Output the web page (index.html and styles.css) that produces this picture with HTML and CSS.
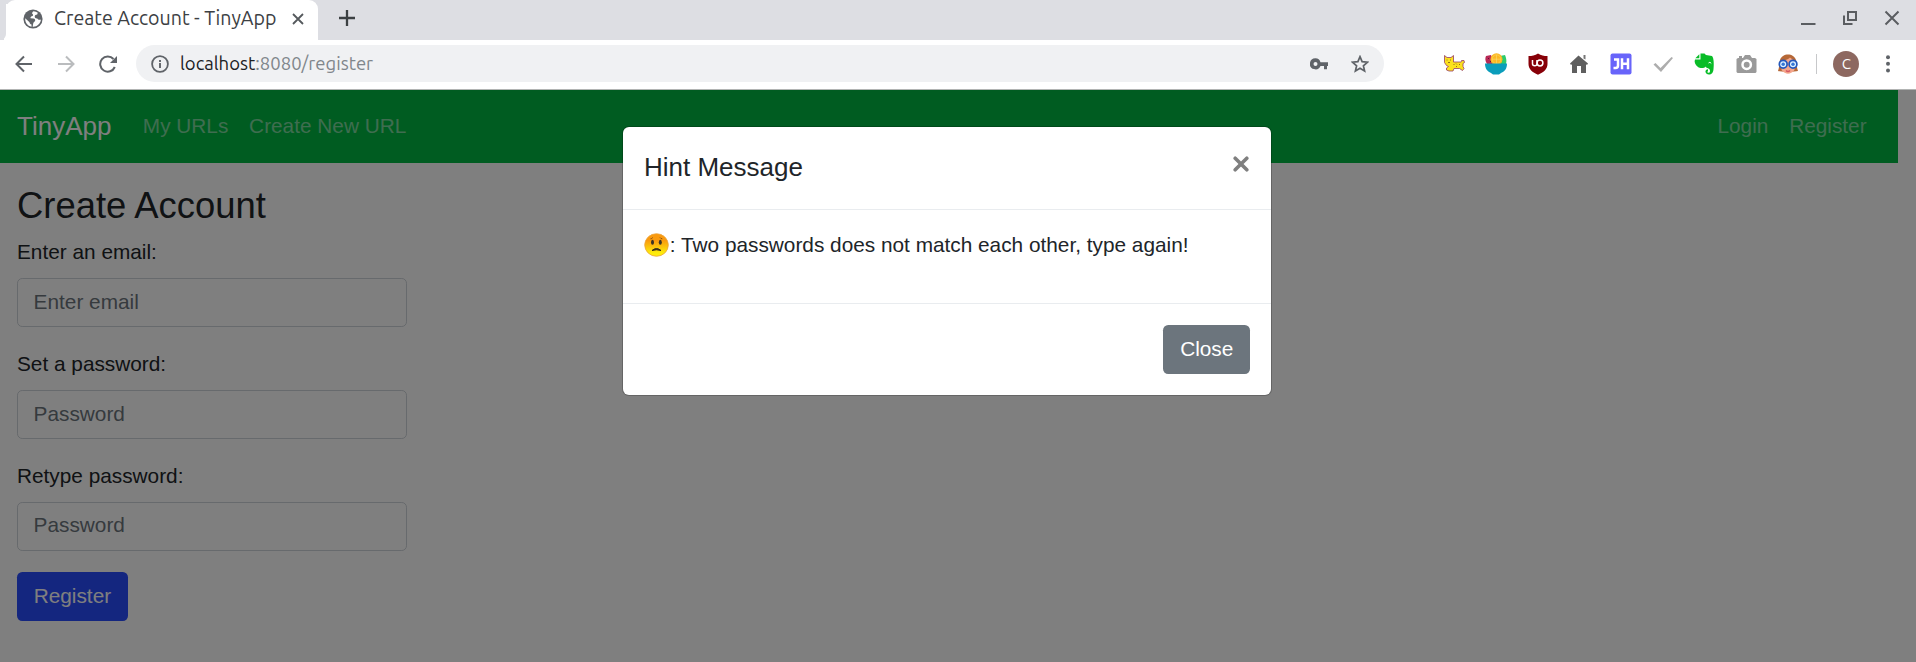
FILE: index.html
```html
<!DOCTYPE html>
<html lang="en">
<head>
<meta charset="utf-8">
<title>Create Account - TinyApp</title>
<link rel="stylesheet" href="styles.css">
</head>
<body>
<header class="browser">
  <div class="tabstrip">
    <div class="tab-prev"></div>
    <div class="tab">
      <svg class="globe" width="20" height="20" viewBox="0 0 20 20"><circle cx="10" cy="10" r="9.6" fill="#5f6368"/><path d="M10.500 2.200c-1 .8-1.600 1.500-1.300 2.500 1 .5 1.200 1.500.3 2.300-1.300.3-2.200 1-2 2.200l3 .3c1.500.2 2 1.500 1.500 2.800-1.200.6-1.800 1.600-2 3.400l-.3 2.100c4 .4 8-3.200 8.200-7.200-1.500.5-3 .2-3.600-1.100-1.500.2-2.600-.5-2.600-1.900 0-1.500 1.200-2 2.500-2.200l.6-1.600c-1.200-.9-2.700-1.500-4.300-1.600z" fill="#fff"/><path d="M2.200 9.200l4.300 4.100c.2 1.500.9 2 2 2.200v2.200c-4-.7-6.600-4.400-6.300-8.500z" fill="#fff"/></svg>
      <span class="tab-title">Create Account - TinyApp</span>
      <svg class="tab-close" width="12" height="12" viewBox="0 0 12 12"><path d="M1 1l10 10M11 1L1 11" stroke="#55595d" stroke-width="1.800"/></svg>
    </div>
    <svg class="new-tab" width="16" height="16" viewBox="0 0 16 16"><path d="M8 0v16M0 8h16" stroke="#3c4043" stroke-width="2.300"/></svg>
    <div class="window-buttons">
      <svg width="16" height="16" viewBox="0 0 16 16"><path d="M1 14h14.500" stroke="#5a5d61" stroke-width="2"/></svg>
      <svg width="16" height="16" viewBox="0 0 16 16"><path d="M6 2h8v8H6zM2 5.500V14h8.500" fill="none" stroke="#5a5d61" stroke-width="2"/></svg>
      <svg width="16" height="16" viewBox="0 0 16 16"><path d="M1.500 1.500l13 13M14.500 1.500l-13 13" stroke="#5a5d61" stroke-width="2"/></svg>
    </div>
  </div>
  <div class="toolbar">
    <div class="history">
      <svg width="18" height="18" viewBox="0 0 18 18"><path d="M17 9H2M9 1.500L1.500 9 9 16.500" fill="none" stroke="#5f6368" stroke-width="2"/></svg>
      <svg width="18" height="18" viewBox="0 0 18 18"><path d="M1 9h15M9 1.500L16.500 9 9 16.500" fill="none" stroke="#babcbe" stroke-width="2"/></svg>
      <svg width="18" height="18" viewBox="0 0 18 18"><path d="M15.800 12A7.600 7.600 0 1 1 14.500 4" fill="none" stroke="#5f6368" stroke-width="2"/><path d="M18 1v7h-7z" fill="#5f6368"/></svg>
    </div>
    <div class="omnibox">
      <svg class="info" width="18" height="18" viewBox="0 0 18 18"><circle cx="9" cy="9" r="7.900" fill="none" stroke="#5f6368" stroke-width="1.800"/><path d="M9 8v5M9 5v2" stroke="#5f6368" stroke-width="1.900"/></svg>
      <span class="url"><span class="host">localhost</span>:8080/register</span>
      <svg class="key" width="18" height="12" viewBox="0 0 18 12"><path fill-rule="evenodd" d="M5.500.3a5.500 5.500 0 1 0 5 7.600H14v3.300h3V7.900h1V4.200h-7.500A5.500 5.500 0 0 0 5.500.3zm0 3.600a2 2 0 1 1 0 4 2 2 0 0 1 0-4z" fill="#5f6368"/></svg>
      <svg width="18" height="18" viewBox="0 0 18 18"><path d="M9 1.700l2.100 5 5.400.5-4.100 3.600 1.200 5.300L9 13.300l-4.600 2.800 1.200-5.300-4.100-3.600 5.400-.5z" fill="none" stroke="#5f6368" stroke-width="1.700"/></svg>
    </div>
    <div class="extensions">
      <svg width="22" height="22" viewBox="0 0 22 22"><path d="M1.500 2.500L4 4.500h4l2.500-2v6.500H17c1.500 0 2-.5 1.500-1.500h2.500l.5 2-1.500 1v3l1 2-1.500 2-3-2H11l-1 2.500H6L3.500 17v-2l2-1.500-2-1-2-3z" fill="#fbe11e" stroke="#963c66" stroke-width=".8"/><path d="M4 6.500v1M7.500 6.500v1M5 9.500h2M10.500 11l1 1M13 10.500l1 1M16 11l1 1M13 13.500h1" stroke="#7b571c" stroke-width=".8"/></svg>
      <svg width="22" height="22" viewBox="0 0 22 22"><path d="M1 3l5-1 4 9H2C0 8 0 5 1 3z" fill="#b82955"/><path d="M3 5l1 1M5 8l1 1" stroke="#5d1230"/><path d="M15 3l5-1c1 3 2 5 1 9h-6z" fill="#2dcb6c"/><circle cx="11.500" cy="6.200" r="6" fill="#fbb823"/><circle cx="11.500" cy="6.200" r="4.400" fill="none" stroke="#fdda6a" stroke-width=".5"/><path d="M11.500 2v9M7 6.200h9" stroke="#fde17a" stroke-width=".5"/><path d="M0 10.500h22c0 5-2 7.500-6 9.500l-2 1.500H8L6 20c-4-2-6-4.500-6-9.500z" fill="#0b9dbb"/></svg>
      <svg width="22" height="22" viewBox="0 0 22 22"><path d="M11 .5c3 2 6 2.500 9.500 2.500v8c0 5-4 8.500-9.500 10.700C5.500 19.500 1.500 16 1.500 11V3C5 3 8 2.500 11 .5z" fill="#870008"/><path d="M5.500 7v3.800c0 2.600 4.500 2.600 4.500 0V7" fill="none" stroke="#fff" stroke-width="1.500"/><circle cx="13" cy="10" r="2.900" fill="none" stroke="#fff" stroke-width="1.500"/></svg>
      <svg width="22" height="22" viewBox="0 0 22 22"><path d="M10.500 2.500L2 10.500l1 1.500 1-.8V20h5v-7h4v7h5v-8.800l1 .8 1-1.500z" fill="#5f5f5f"/><path d="M15.500 2h2v4.500l-2-1z" fill="#777"/></svg>
      <svg width="22" height="22" viewBox="0 0 22 22"><rect x=".5" y=".5" width="21" height="21" rx="2" fill="#6864fa"/><path d="M4 6.500h4v6q0 2.500-2.500 2.500h-2M12 5.300v10.900M18 5.300v10.900M12 10.800h6" fill="none" stroke="#fff" stroke-width="2.500"/></svg>
      <svg width="22" height="22" viewBox="0 0 22 22"><path d="M1.500 11.500l2-1.500 5 5L19.500 4l1.500 1L9 19z" fill="#adadad"/></svg>
      <svg width="22" height="22" viewBox="0 0 22 22"><path d="M6.500.5h4L12 2l6 1c2 2 2 9 1.500 13-.3 4-2 5.500-4.500 5.500-4 0-5-5-1-5.200v2c-1 0-1 1.500.5 1.500 2 0 2-3.300 0-4.300-2-.5-2.500-1-2.500-2-2 2-6 2-8 .5C1 12 0 8.500 1 6.500h5.500z" fill="#09bc28"/><path d="M1.300 5.300l4-4v4z" fill="#09bc28"/><path d="M14.500 10q1.500-1.800 2.800.5" fill="none" stroke="#fff"/></svg>
      <svg width="22" height="22" viewBox="0 0 22 22"><path d="M3 5V3h3v2h1l2-3h5l2 3h3l1.500 1v13l-1 1h-18L.5 19V6L2 5z" fill="#9a9a9a"/><circle cx="10.700" cy="11.700" r="4.200" fill="#9a9a9a" stroke="#fff" stroke-width="2.500"/></svg>
      <svg width="22" height="22" viewBox="0 0 22 22"><path d="M1 18c1.500-4 1-7 2-11C5-.5 17-.5 19 7c1 4 .5 7 2 11-3 1-17 1-20 0z" fill="#b66837"/><path d="M4.500 8C9 7 12 6 13 4.500L17.500 8v9q-6.500 7.500-13 0z" fill="#f4a78c"/><path d="M9 17.500q2 2 4 0" stroke="#d65864" fill="none" stroke-width="1.500"/><g fill="#dcefff" stroke="#2358bd" stroke-width="1.700"><circle cx="6.200" cy="11.200" r="3.900"/><circle cx="16" cy="11.200" r="3.900"/></g><circle cx="6.200" cy="11.200" r="1.700" fill="#3477d6"/><circle cx="16" cy="11.200" r="1.700" fill="#3477d6"/></svg>
    </div>
    <span class="divider"></span>
    <span class="avatar">C</span>
    <svg class="kebab" width="4" height="18" viewBox="0 0 4 18"><g fill="#5f6368"><circle cx="2" cy="2.200" r="2"/><circle cx="2" cy="8.800" r="2"/><circle cx="2" cy="15.400" r="2"/></g></svg>
  </div>
</header>
<main class="viewport">
  <nav class="navbar">
    <a class="brand">TinyApp</a>
    <a class="nav-link">My URLs</a>
    <a class="nav-link">Create New URL</a>
    <a class="nav-link nav-right">Login</a>
    <a class="nav-link">Register</a>
  </nav>
  <form class="form">
    <h3 class="heading">Create Account</h3>
    <label class="label" for="email">Enter an email:</label>
    <input class="field" id="email" type="email" placeholder="Enter email">
    <label class="label" for="pw">Set a password:</label>
    <input class="field" id="pw" type="password" placeholder="Password">
    <label class="label" for="pw2">Retype password:</label>
    <input class="field" id="pw2" type="password" placeholder="Password">
    <button class="btn btn-primary" type="button">Register</button>
  </form>
  <div class="backdrop">
    <section class="modal">
      <div class="modal-header">
        <h5 class="modal-title">Hint Message</h5>
        <svg class="modal-close" width="16" height="16" viewBox="0 0 16 16"><path d="M2.200 2.200l11.600 11.600M13.800 2.200L2.200 13.800" stroke="#7f7f7f" stroke-width="3.600" stroke-linecap="round"/></svg>
      </div>
      <div class="modal-body">
        <svg class="emoji" width="25" height="24" viewBox="0 0 25 24"><defs><linearGradient id="face" x2="0" y2="1"><stop offset=".3" stop-color="#f99a0f"/><stop offset=".85" stop-color="#fdec0b"/></linearGradient></defs><ellipse cx="12.500" cy="12" rx="11.800" ry="11.300" fill="url(#face)" stroke="#eca43c" stroke-width=".8"/><ellipse cx="8.500" cy="9.300" rx="1.500" ry="2.500" fill="#3b3326"/><ellipse cx="16.300" cy="9.300" rx="1.500" ry="2.500" fill="#3b3326"/><path d="M6.500 5.800q1.500 0 2.300-1.300M18.300 5.800q-1.500 0-2.300-1.300" fill="none" stroke="#7b4b17" stroke-width=".9"/><path d="M8 17.500q4.500-4 9 0-4.500-1.500-9 0z" fill="#332b1c" stroke="#332b1c"/></svg><span>: Two passwords does not match each other, type again!</span>
      </div>
      <div class="modal-footer"><button class="btn btn-secondary" type="button">Close</button></div>
    </section>
  </div>
</main>
</body>
</html>
```
FILE: styles.css
```css
* { box-sizing: border-box; }
body { margin: 0; height: 662px; overflow: hidden; display: flex; flex-direction: column; font-family: "Liberation Sans", Arial, sans-serif; font-size: 20.800px; line-height: 1.5; color: #212529; }
svg { display: block; flex: none; }
h3, h5 { margin: 0; font-weight: 400; }

.browser { height: 90px; flex: none; background: #fff; border-bottom: 1px solid #b2b4b3; font-family: Ubuntu, "Noto Sans", sans-serif; }
.tabstrip { height: 40px; background: #dddee3; display: flex; align-items: center; }
.tab-prev { width: 6px; height: 40px; background: #dddee3; border-bottom-right-radius: 8px; box-shadow: 4px 4px 0 #fff; }
.tab { width: 312px; height: 40px; background: #fff; border-radius: 9px 9px 0 0; display: flex; align-items: center; padding: 0 15px 3px 17px; }
.tab-title { margin-left: 11px; width: 222px; font-size: 19.600px; white-space: nowrap; color: #3c4043; }
.tab-close { margin-left: 16px; }
.new-tab { margin: 0 0 4px 21px; }
.window-buttons { margin: 0 16px 4px auto; display: flex; gap: 26px; }
.toolbar { height: 49px; display: flex; align-items: center; padding: 0 26px 2px 15px; }
.history { display: flex; gap: 24px; }
.omnibox { margin-left: 19px; width: 1248px; height: 37px; border-radius: 19px; background: #f0f1f3; display: flex; align-items: center; padding: 0 15px 0 15px; gap: 23px; }
.url { font-size: 18.500px; color: #80868b; margin-left: -12px; margin-right: auto; white-space: nowrap; }
.host { color: #202124; }
.extensions { margin-left: 59px; display: flex; gap: 19.800px; }
.divider { width: 1px; height: 20px; background: #c7c8ca; margin-left: 17px; }
.avatar { width: 26px; height: 26px; margin-left: 16px; border-radius: 50%; background: #8d6860; color: #fff; font-size: 15px; line-height: 26px; text-align: center; }
.kebab { margin-left: auto; }

.viewport { position: relative; flex: 1; background: #fff; }
.navbar { width: 1898px; height: 73px; background: #00b842; display: flex; align-items: center; padding: 0 21px 1px 17px; }
.brand { font-size: 26px; color: #fff; margin-right: 21px; }
.nav-link { color: rgba(255, 255, 255, .5); padding: 0 10.400px; }
.nav-right { margin-left: auto; }
.form { width: 424px; padding: 21.400px 17px 0; display: flex; flex-direction: column; align-items: flex-start; }
.heading { font-size: 36.400px; line-height: 1.2; margin-bottom: 8px; }
.label { height: 31.200px; margin-bottom: 10.800px; }
.field { width: 390px; height: 49.400px; margin: 0 0 20.400px; padding: 6.800px 15.600px 8.800px; border: 1px solid #ced4da; border-radius: 5.200px; background: #fff; font: inherit; }
.field::placeholder { color: #6c757d; opacity: 1; }
.btn { height: 49px; border: 0; border-radius: 5.200px; padding: 0 16.700px 2px; font: inherit; color: #fff; }
.btn-primary { background: #284cff; margin-top: 1px; }
.btn-secondary { background: #6c757d; }

.backdrop { position: absolute; inset: 0; background: rgba(0, 0, 0, .5); display: flex; justify-content: center; align-items: flex-start; padding: 37px 22px 0 0; }
.modal { width: 648px; height: 268px; background: #fff; border-radius: 6px; box-shadow: 0 0 0 1px rgba(0, 0, 0, .2); }
.modal-header { height: 83px; border-bottom: 1px solid #e9ecef; padding: 20.800px 22px 0 21px; display: flex; justify-content: space-between; }
.modal-title { font-size: 26px; line-height: 39px; }
.modal-close { margin-top: 8px; }
.modal-body { height: 94px; border-bottom: 1px solid #e9ecef; padding: 19px 21px; display: flex; gap: .8px; }
.emoji { margin-top: 4px; }
.modal-footer { padding: 21px; display: flex; justify-content: flex-end; }
```
